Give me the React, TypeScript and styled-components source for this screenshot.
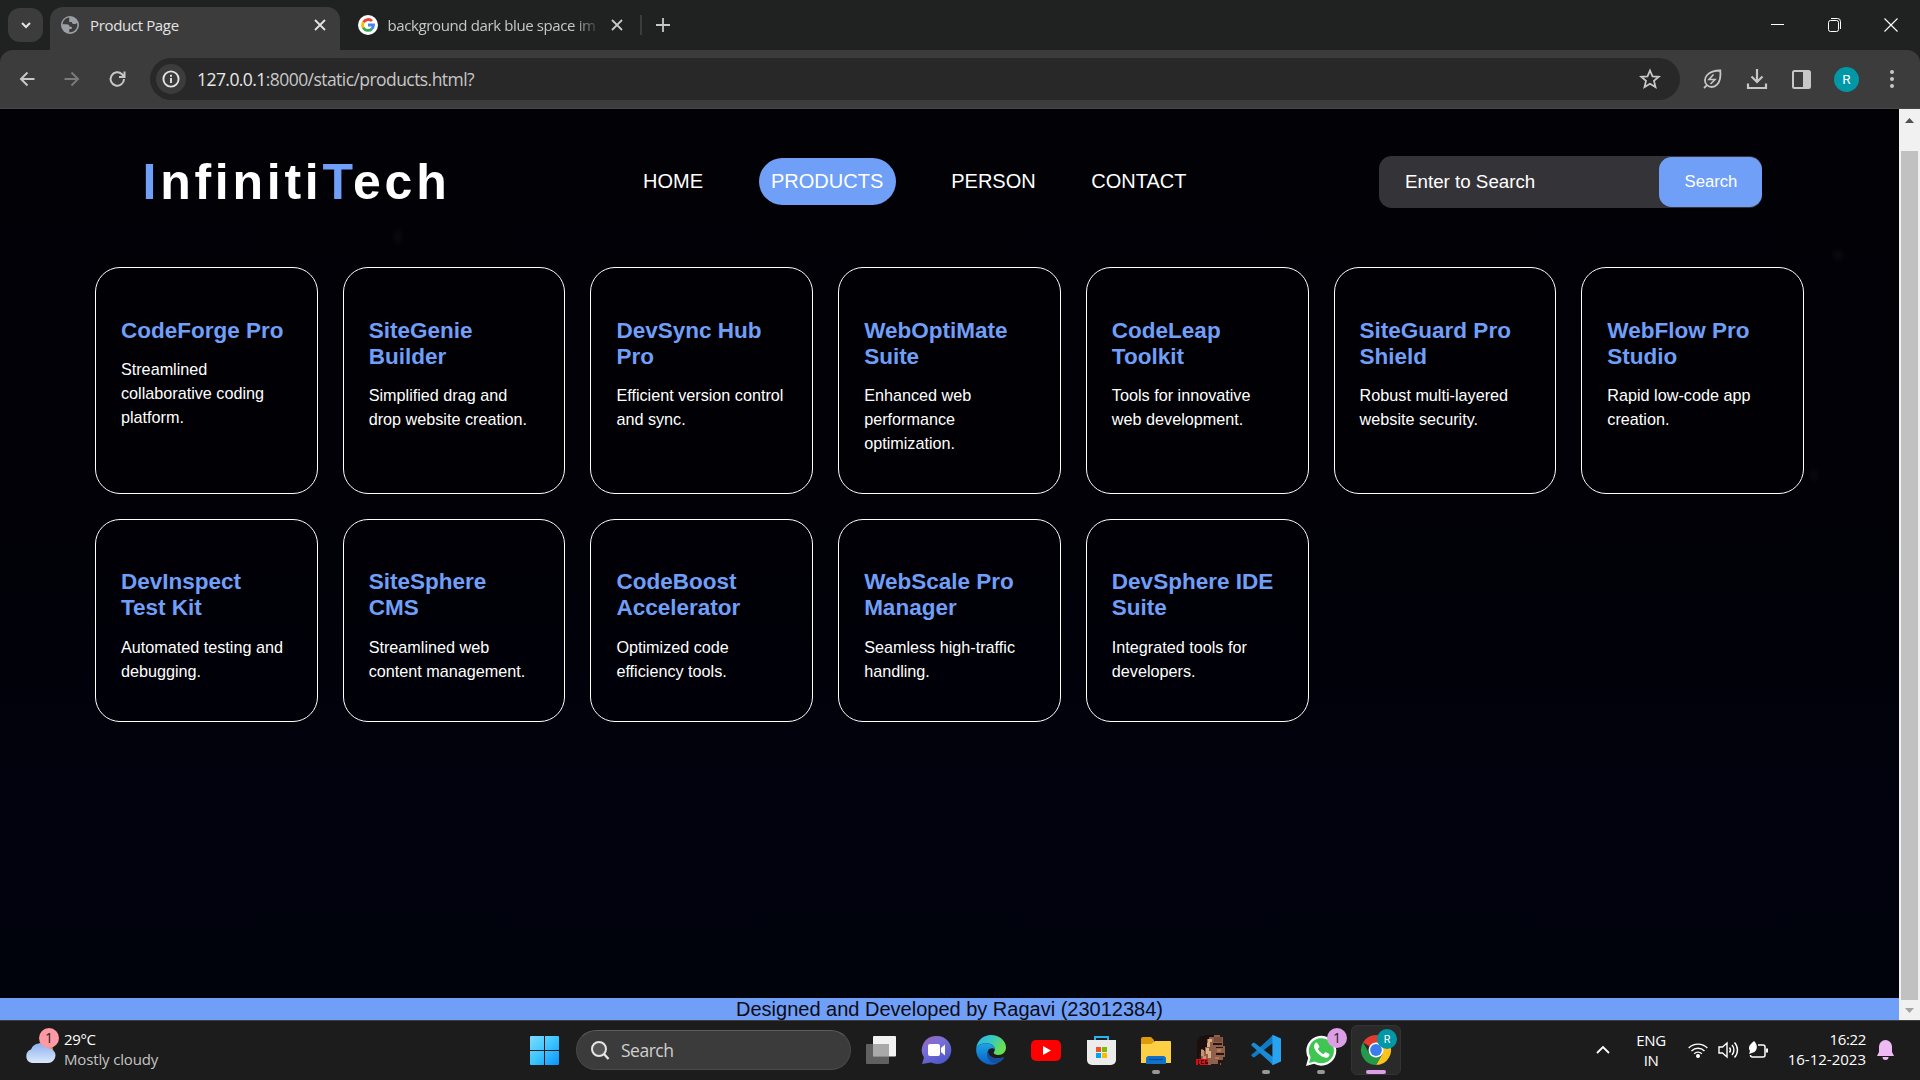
import React from "react";
import styled, { createGlobalStyle } from "styled-components";

const Global = createGlobalStyle`
  * { box-sizing: border-box; }
  body { margin: 0; background: #000; overflow: hidden; font-family: "Liberation Sans", Arial, sans-serif; }
  svg { display: block; flex: none; overflow: visible; }
`;
const ui = `"Open Sans", "Noto Sans", sans-serif`;
const blue = "#709ff8";

const Screen = styled.div`
  width: 1920px; height: 1080px; display: flex; flex-direction: column; overflow: hidden;
`;

/* browser frame */
const TabStrip = styled.div`
  height: 50px; flex: none; background: #202221; display: flex; align-items: flex-start; font-family: ${ui};
`;
const TabMenu = styled.div`
  width: 35px; height: 34px; margin: 8px 7px 0 8px; border-radius: 12px; background: #3c3c3c;
  display: flex; align-items: center; justify-content: center;
`;
const Tab = styled.div<{ $active?: boolean; $w: number; $left: number; $right: number }>`
  width: ${p => p.$w}px; height: ${p => (p.$active ? 43 : 42)}px; margin-top: ${p => (p.$active ? 7 : 8)}px;
  padding: 0 ${p => p.$right}px 8px ${p => p.$left}px; display: flex; align-items: center; gap: ${p => (p.$active ? 11 : 9.5)}px;
  background: ${p => (p.$active ? "#3c3c3c" : "transparent")};
  border-radius: 13px 13px 0 0; color: ${p => (p.$active ? "#e3e3e3" : "#c7c7c7")};
`;
const TabTitle = styled.span<{ $fade?: boolean; $ls: string }>`
  flex: 1; min-width: 0; white-space: nowrap; font-size: 15px; line-height: 20px;
  letter-spacing: ${p => p.$ls};
  ${p => p.$fade && "mask-image: linear-gradient(90deg, #000 88%, rgba(0,0,0,.2) 99%);"}
`;
const Divider = styled.i`width: 2px; height: 20px; margin: 15px 14px 0 13px; background: #3c3c3c;`;
const NewTab = styled.div`margin-top: 18px;`;
const WindowButtons = styled.div`
  margin-left: auto; padding: 18px 22px 0 0; display: flex; gap: 43px; align-items: center;
`;
const Toolbar = styled.div`
  height: 59px; flex: none; background: #202221; font-family: ${ui};
`;
const ToolbarFace = styled.div`
  height: 100%; background: #3c3c3c; border-radius: 13px 13px 0 0; border-bottom: 1px solid #484848;
  display: flex; align-items: center; padding: 0 5px 0 17px;
`;
const NavButtons = styled.div`display: flex; gap: 25px; width: 133px; flex: none;`;
const Address = styled.div`
  width: 1530px; flex: none; height: 42px; border-radius: 21px; background: #282828; display: flex; align-items: center;
  padding: 0 19px 0 6px;
`;
const InfoBadge = styled.span`
  width: 30px; height: 30px; border-radius: 50%; background: #3c3c3c; display: grid; place-items: center;
`;
const Url = styled.span`
  flex: 1; margin-left: 11px; font-size: 17.5px; letter-spacing: -0.56px; color: #c7c7c7; white-space: nowrap;
  b { font-weight: 400; color: #e8e8e8; }
`;
const Tools = styled.div`
  flex: 1; display: grid; grid-template-columns: repeat(5, 45px); align-items: center; justify-items: center; padding-left: 9px;
`;
const Avatar = styled.span<{ $size: number }>`
  width: ${p => p.$size}px; height: ${p => p.$size}px; border-radius: 50%; background: #0097a7; color: #fff;
  font: 400 ${p => p.$size * 0.54}px Roboto, sans-serif; display: grid; place-items: center;
`;

/* page */
const Viewport = styled.div`height: 911px; flex: none; display: flex;`;
const Page = styled.main`
  width: 1899px; height: 100%; display: flex; flex-direction: column; color: #fff;
  background:
    radial-gradient(ellipse 7px 10px at 398px 128px, rgba(255,255,255,.035), transparent),
    radial-gradient(ellipse 8px 8px at 1838px 146px, rgba(255,255,255,.035), transparent),
    radial-gradient(ellipse 7px 9px at 1814px 366px, rgba(255,255,255,.03), transparent),
    linear-gradient(180deg, #010106 0%, #010107 45%, #01020d 75%, #00020c 100%);
`;
const Header = styled.header`height: 158px; flex: none; display: flex; align-items: flex-start;`;
const Logo = styled.h1`
  margin: 44px 0 0 142.5px; width: 500.5px; font-size: 50px; line-height: 58px; font-weight: 700; letter-spacing: 3.75px;
  span { color: ${blue}; }
`;
const Nav = styled.nav`
  margin-top: 49px; height: 47px; width: 736px; flex: none; display: flex; align-items: center; gap: 55.5px; font-size: 20px; line-height: 23px;
`;
const NavLink = styled.a<{ $active?: boolean }>`
  color: #fff; ${p => (p.$active ? `background: ${blue}; padding: 12px 12.5px; border-radius: 25px;` : "padding-bottom: 1px;")}
`;
const SearchBox = styled.div`
  margin-top: 47px; width: 383px; height: 52px; border-radius: 12.5px; background: #343338; display: flex; align-items: center;
  justify-content: space-between; padding-left: 26px; font-size: 18.75px;
`;
const SearchButton = styled.button`
  width: 103px; height: 50px; border: 0; border-radius: 12.5px; background: ${blue}; color: #fff; padding: 0 0 1px 1px;
  font: 16.67px "Liberation Sans", Arial, sans-serif;
`;
const Grid = styled.section`
  padding: 0 5%; flex: 1; display: grid; grid-template-columns: repeat(7, 1fr); gap: 25px; align-content: start;
`;
const Card = styled.article`
  border: 1px solid #fff; border-radius: 25px; padding: 49.6px 25px 37.5px; background: rgba(0,0,0,.2);
`;
const CardTitle = styled.h2`margin: 0 0 13.7px; font-size: 22.5px; line-height: 26px; color: ${blue};`;
const CardText = styled.p`margin: 0; font-size: 16.2px; line-height: 24px;`;
const Footer = styled.footer`
  height: 22px; flex: none; background: ${blue}; color: #0b0b12; font-size: 20px; line-height: 22px; text-align: center;
`;
const Scrollbar = styled.div`
  width: 21px; background: #f1f1f1; display: flex; flex-direction: column; align-items: center;
`;
const ScrollEnd = styled.div<{ $h: number }>`height: ${p => p.$h}px; flex: none; display: grid; place-items: center;`;
const Thumb = styled.div`width: 17px; flex: 1; background: #c1c1c1;`;

/* taskbar */
const Taskbar = styled.div`
  height: 60px; flex: none; background: #1c1c1c; border-top: 1px solid #3e3e3e; display: flex; align-items: center;
  font-family: ${ui}; font-size: 15px; color: #fff; padding-bottom: 1px;
`;
const Weather = styled.div`width: 530px; flex: none; padding-left: 25px; display: flex; align-items: center; gap: 9px;`;
const WeatherText = styled.div`
  display: flex; flex-direction: column; line-height: 20px; letter-spacing: -0.35px; padding-bottom: 3px;
  span { color: #c4c4c4; letter-spacing: -0.15px; }
`;
const SearchPill = styled.div`
  width: 275px; height: 40px; margin: 0 15px 0 17px; border-radius: 20px; background: #3b3b3b; border: 1px solid #494949; border-top-color: #5c5c5c;
  display: flex; align-items: center; gap: 12px; padding-left: 14px; font-size: 17.5px; letter-spacing: -0.5px; color: #cfcfcf;
`;
const Apps = styled.div`display: flex; align-items: center; gap: 5px; margin-left: -10px;`;
const AppButton = styled.div<{ $active?: boolean }>`
  width: 50px; height: 50px; border-radius: 6px; position: relative; display: grid; place-items: center;
  background: ${p => (p.$active ? "#2a2a2a" : "transparent")};
  border: 1px solid ${p => (p.$active ? "#333" : "transparent")};
`;
const Running = styled.i<{ $active?: boolean }>`
  position: absolute; bottom: 0; left: 50%; transform: translateX(-50%); height: 4px; border-radius: 2px;
  width: ${p => (p.$active ? 20 : 8)}px; background: ${p => (p.$active ? "#dc9fe6" : "#979797")};
`;
const Badge = styled.span<{ $bg: string; $x: number; $y: number }>`
  position: absolute; left: ${p => p.$x}px; top: ${p => p.$y}px; width: 20px; height: 20px; border-radius: 50%;
  background: ${p => p.$bg}; color: #222; font-size: 14px; line-height: 20px; text-align: center;
`;
const BadgeSlot = styled.span<{ $x: number; $y: number }>`position: absolute; left: ${p => p.$x}px; top: ${p => p.$y}px;`;
const WeatherIcon = styled.div`position: relative; width: 30px; height: 40px;`;
const Tray = styled.div`margin-left: auto; display: flex; align-items: center; padding-right: 26px;`;
const Lang = styled.div`width: 40px; margin: 0 17px 0 21px; text-align: center; line-height: 20px; letter-spacing: -0.4px;`;
const TrayIcons = styled.div`display: flex; gap: 10px; align-items: center;`;
const Clock = styled.div`
  width: 98px; text-align: right; line-height: 20px; margin-right: 11px; padding-bottom: 3px; letter-spacing: -0.35px;
  span { letter-spacing: 0; }
`;

const products = [
  ["CodeForge Pro", "Streamlined collaborative coding platform."],
  ["SiteGenie Builder", "Simplified drag and drop website creation."],
  ["DevSync Hub Pro", "Efficient version control and sync."],
  ["WebOptiMate Suite", "Enhanced web performance optimization."],
  ["CodeLeap Toolkit", "Tools for innovative web development."],
  ["SiteGuard Pro Shield", "Robust multi-layered website security."],
  ["WebFlow Pro Studio", "Rapid low-code app creation."],
  ["DevInspect Test Kit", "Automated testing and debugging."],
  ["SiteSphere CMS", "Streamlined web content management."],
  ["CodeBoost Accelerator", "Optimized code efficiency tools."],
  ["WebScale Pro Manager", "Seamless high-traffic handling."],
  ["DevSphere IDE Suite", "Integrated tools for developers."],
];

type LineProps = { d: string; size?: number; box?: number; color?: string; w?: number };
const Line = ({ d, size = 20, box = 20, color = "#c7c7c7", w = 2 }: LineProps) => (
  <svg width={size} height={size} viewBox={`0 0 ${box} ${box}`} fill="none" stroke={color} strokeWidth={w}><path d={d} /></svg>
);

const Globe = () => (
  <svg width="18" height="18" viewBox="0 0 18 18"><circle cx="9" cy="9" r="9" fill="#9aa0a6" />
    <path d="M8.500 1.600c-3.700.2-6.600 3-6.900 6.600h4.200c1.800 0 2.800 1 2.800 2.600h2.200v2.200H8.300v3.300c4.500.4 8-3 8-7.200 0-.7-.1-1.300-.3-2-.7.8-1.600 1-2.700 1-1.700 0-2.400-.9-2.400-2.200H8.200V3.500z" fill="#3c3c3c" /></svg>
);
const Google = () => (
  <svg width="20" height="20" viewBox="0 0 20 20"><circle cx="10" cy="10" r="10" fill="#fff" />
    <g fill="none" strokeWidth="2.800"><path d="M5.500 7.200A5.500 5.500 0 0 1 14 6" stroke="#ea4335" /><path d="M5.300 12.700A5.500 5.500 0 0 1 5.500 7" stroke="#fbbc05" /><path d="M13.800 13.900A5.500 5.500 0 0 1 5.200 12.600" stroke="#34a853" /><path d="M10 10h5.500a5.500 5.500 0 0 1-1.900 4" stroke="#4285f4" /></g></svg>
);
const ChromeLogo = () => (
  <svg width="30" height="30" viewBox="0 0 30 30">
    <path d="M15 15 2 7.500A15 15 0 0 1 28 7.500H15z" fill="#e33b2e" />
    <path d="M15 7.500h13A15 15 0 0 1 15 30l6.500-11.200z" fill="#fcc31e" />
    <path d="M2 7.500A15 15 0 0 0 15 30l6.500-11.200L15 22 8.500 18.800z" fill="#239a4a" />
    <circle cx="15" cy="15" r="7.500" fill="#fff" /><circle cx="15" cy="15" r="5.900" fill="#3b7ded" /></svg>
);
const EdgeLogo = () => (
  <svg width="30" height="30" viewBox="0 0 30 30"><defs>
    <linearGradient id="e1" x1="0" y1="0" x2="1" y2=".4"><stop offset="0" stopColor="#2cb2e8" /><stop offset=".5" stopColor="#35c8c8" /><stop offset="1" stopColor="#6ae04f" /></linearGradient>
    <linearGradient id="e2" x1="0" y1="0" x2="0" y2="1"><stop offset="0" stopColor="#1da4e4" /><stop offset="1" stopColor="#0a5fc4" /></linearGradient></defs>
    <path d="M.2 13C1.300 5.300 7.500 0 15 0c8.500 0 15 6 15 12.500 0 4.500-3.400 7.500-7.600 7.500-3 0-4.700-1-4.700-2.200 0-.8 1.100-1.300 1.100-3.300 0-3.300-3.400-6.200-8-6.200C5.500 8.300 1.500 10 .2 13z" fill="url(#e1)" />
    <path d="M.2 13C2 9.800 6 8.300 10.500 8.300c4.800 0 8.300 2.900 8.300 6.200-1.500-2-6.300-1.500-7 2.200C10.500 23 16 29 22 27.900A15 15 0 0 1 .2 13z" fill="url(#e2)" />
    <path d="M12 15.500c-3.500 6 2 14.300 10 12.400 2.500-1 4.700-2.800 6-5 .4-.7-.2-1-.8-.7C20 24.500 12 22.500 12 15.500z" fill="#164f9e" /></svg>
);
const WhatsApp = () => (
  <svg width="31" height="31" viewBox="0 0 31 31"><path d="M0 31l2.200-8A15 15 0 1 1 8 28.800z" fill="#fff" />
    <path d="M3 28l1.600-5.700A12.600 12.600 0 1 1 8.800 26.500z" fill="#3fc552" />
    <path d="M11.400 8.200c-.5-1-1.400-.9-2-.3-3 3-.6 7.600 3.200 11.200 4 3.700 8.600 5 10.500 1.800.7-1.300.5-1.800-.2-2.200l-2.900-1.400c-.6-.3-1 0-1.300.5l-1 1.200c-.5.6-5-2.600-5.700-5-.1-.5 1.300-1.300 1.400-2.300.1-.6-1.500-2.700-2-3.500z" fill="#fff" /></svg>
);
const VSCode = () => (
  <svg width="30" height="30" viewBox="0 0 30 30"><path d="M22 0L3.500 17.300 0 20l2 2.300h1.500L22 8z" fill="#0d7cc4" />
    <path d="M0 10l2-2.200h1.500L22 22v8L3 12.700z" fill="#1b8ad4" /><path d="M22 0l8 3.500v23L22 30c-.8 0-.6-.3-.6-1V1c0-.6-.1-1 .6-1z" fill="#29a3ef" /></svg>
);
const Portrait = () => (
  <svg width="30" height="30" viewBox="0 0 30 30" shapeRendering="crispEdges">
    <path d="M4 2h4V0h16v2h3v9h2v11h-2v6h-2v2H10l-5-5V9H2V4h2z" fill="#8f604b" />
    <path d="M3 1h5V0h10v2h-5v2h-2v8H9v4H7v-2H5v4H3v7H1V4h2z" fill="#1a0f0c" />
    <path d="M12 4h4v3h-2v5h-3V8h1zM10 13h3v3h2v7h-3v-4h-2z" fill="#dcae86" />
    <path d="M5 15h3v6h2v4H7v-4H5z" fill="#c89270" />
    <path d="M18 2h8v5h-8z" fill="#7a4c3b" />
    <path d="M17 8h9v2h-9zM20 12h7v1h-7zM20 18h8v2h-8zM22 25h5v3h-3v2h-9v-1h7z" fill="#2b1410" />
    <path d="M21 14h4v3h-4zM19 22h4v2h-4z" fill="#b07a5c" />
    <path d="M0 24h12v6H0z" fill="#e30b12" />
    <path d="M2 25v4h2M7.500 25.500H5.500v3h2M11 25.500H9v1.500h2v1.500H9" stroke="#3c0606" fill="none" /></svg>
);

export default function App() {
  return (
    <Screen>
      <Global />
      <TabStrip>
        <TabMenu><Line d="M4 6l4 4 4-4" size={16} box={16} color="#e3e3e3" /></TabMenu>
        <Tab $active $w={290} $left={11} $right={10}>
          <Globe /><TabTitle $ls="-0.35px">Product Page</TabTitle>
          <Line d="M5 5l10 10M15 5L5 15" color="#e3e3e3" w={1.800} />
        </Tab>
        <Tab $w={287} $left={18} $right={0}>
          <Google /><TabTitle $fade $ls="-0.38px">background dark blue space im</TabTitle>
          <Line d="M5 5l10 10M15 5L5 15" w={1.800} />
        </Tab>
        <Divider />
        <NewTab><Line d="M7 0v14M0 7h14" size={14} box={14} w={1.800} /></NewTab>
        <WindowButtons>
          <Line d="M0 6.500h13" size={14} box={14} color="#fff" w={1} />
          <svg width="13" height="14" viewBox="0 0 13 14" fill="none" stroke="#fff"><rect x=".5" y="2.500" width="10" height="11" rx="2" /><path d="M3 .5h6.500a3 3 0 0 1 3 3V11" /></svg>
          <Line d="M.5.5l13 13M13.500.5l-13 13" size={14} box={14} color="#fff" w={1.100} />
        </WindowButtons>
      </TabStrip>
      <Toolbar>
        <ToolbarFace>
          <NavButtons>
            <Line d="M17.500 10H4M10.500 3.500L4 10l6.500 6.500" />
            <Line d="M2.500 10H16M9.500 3.500L16 10l-6.500 6.500" color="#7a7a7a" />
            <Line d="M17 10A6.700 6.700 0 1 1 15 5.200L16.500 7M17.500 2.500V8H12" />
          </NavButtons>
          <Address>
            <InfoBadge><svg width="18" height="18" viewBox="0 0 18 18" fill="none" stroke="#e3e3e3" strokeWidth="1.900"><circle cx="9" cy="9" r="7.600" /><path d="M9 8v5M9 4.800v2" /></svg></InfoBadge>
            <Url><b>127.0.0.1</b>:8000/static/products.html?</Url>
            <Line d="M11 2.500l2.500 5.800 6.300.5-4.800 4.100 1.500 6.200-5.500-3.300-5.500 3.300L7 12.900 2.200 8.800l6.300-.5z" size={22} box={22} w={1.800} />
          </Address>
          <Tools>
            <svg width="20" height="20" viewBox="0 0 20 20" fill="none" stroke="#c7c7c7" strokeWidth="1.800"><path d="M18.300 1.500c.6 6-.2 11-3.300 14.200-3 3-7.200 3-10 .5s-2.800-7 .2-10.200C8.200 2.800 12.500 1.500 18.300 1.500zM5 16.200L2 19" /><path d="M11.500 5.500L7 10.500h6L8.500 15" strokeWidth="1.600" /></svg>
            <Line d="M10 0v12M4.500 7.500L10 13l5.500-5.500M1 14.500V19h18v-4.500" w={2.200} />
            <svg width="19" height="19" viewBox="0 0 19 19"><rect x="1" y="1" width="17" height="17" rx="1.500" fill="none" stroke="#c7c7c7" strokeWidth="2" /><path d="M11 1h7v17h-7z" fill="#c7c7c7" /></svg>
            <Avatar $size={25}>R</Avatar>
            <svg width="20" height="20" viewBox="0 0 20 20" fill="#c7c7c7"><circle cx="10" cy="3" r="2" /><circle cx="10" cy="10" r="2" /><circle cx="10" cy="17" r="2" /></svg>
          </Tools>
        </ToolbarFace>
      </Toolbar>

      <Viewport>
        <Page>
          <Header>
            <Logo><span>I</span>nfiniti<span>T</span>ech</Logo>
            <Nav>
              <NavLink>HOME</NavLink><NavLink $active>PRODUCTS</NavLink><NavLink>PERSON</NavLink><NavLink>CONTACT</NavLink>
            </Nav>
            <SearchBox>Enter to Search<SearchButton>Search</SearchButton></SearchBox>
          </Header>
          <Grid>
            {products.map(([title, text]) => (
              <Card key={title}><CardTitle>{title}</CardTitle><CardText>{text}</CardText></Card>
            ))}
          </Grid>
          <Footer>Designed and Developed by Ragavi (23012384)</Footer>
        </Page>
        <Scrollbar>
          <ScrollEnd $h={42}><svg width="9" height="42"><path d="M0 14l4.500-5L9 14z" fill="#505050" /></svg></ScrollEnd>
          <Thumb />
          <ScrollEnd $h={20}><svg width="9" height="5"><path d="M0 0l4.500 5L9 0z" fill="#a3a3a3" /></svg></ScrollEnd>
        </Scrollbar>
      </Viewport>

      <Taskbar>
        <Weather>
          <WeatherIcon>
            <svg width="30" height="40" viewBox="0 0 30 40"><defs><linearGradient id="cl" x1="0" y1="0" x2="0" y2="1"><stop offset="0" stopColor="#8db2f0" /><stop offset="1" stopColor="#dbe8fb" /></linearGradient></defs>
              <circle cx="20" cy="19" r="8" fill="#f58220" />
              <path d="M7 33a7 7 0 0 1-1-13.500A9.500 9.500 0 0 1 23 18a7.500 7.500 0 0 1 0 15z" fill="url(#cl)" /></svg>
            <Badge $bg="#ff99a4" $x={14} $y={-2}>1</Badge>
          </WeatherIcon>
          <WeatherText>29°C<span>Mostly cloudy</span></WeatherText>
        </Weather>
        <svg width="29" height="29" viewBox="0 0 29 29"><defs><linearGradient id="w" x1="0" y1="0" x2="1" y2="1"><stop offset="0" stopColor="#7fdcff" /><stop offset=".5" stopColor="#3cc4ff" /><stop offset="1" stopColor="#0a93fb" /></linearGradient></defs>
          <path d="M0 1a1 1 0 0 1 1-1h13v14H0zM15 0h13a1 1 0 0 1 1 1v13H15zM0 15h14v14H1a1 1 0 0 1-1-1zM15 15h14v13a1 1 0 0 1-1 1H15z" fill="url(#w)" /></svg>
        <SearchPill>
          <svg width="18" height="19" viewBox="0 0 18 19" fill="none" stroke="#e6e6e6" strokeWidth="2"><circle cx="8" cy="8" r="7" fill="#555" /><path d="M13 13l4.500 5" strokeWidth="2.400" /></svg>
          Search
        </SearchPill>
        <Apps>
          <AppButton><svg width="30" height="28" viewBox="0 0 30 28"><rect x="7" y="0" width="23" height="20.500" rx="1" fill="#f2f2f2" /><rect x="0" y="8" width="23" height="20" rx="1" fill="#6c6c6c" fillOpacity=".85" /><path d="M7 8h16v12.500H7z" fill="#a9a9a9" /></svg></AppButton>
          <AppButton><svg width="29" height="28" viewBox="0 0 29 28"><defs><linearGradient id="t" x1="0" y1="0" x2=".6" y2="1"><stop offset="0" stopColor="#a45fb4" /><stop offset=".4" stopColor="#7a6fd8" /><stop offset="1" stopColor="#5059c9" /></linearGradient></defs><path d="M15 0a14 14 0 1 1-6 26.500L0 28l2-6.500A14 14 0 0 1 15 0z" fill="url(#t)" /><rect x="6" y="8" width="12" height="12" rx="2" fill="#fff" /><path d="M19 12l4-3.500v11L19 16z" fill="#fff" /></svg></AppButton>
          <AppButton><EdgeLogo /></AppButton>
          <AppButton><svg width="30" height="21" viewBox="0 0 30 21"><rect width="30" height="21" rx="5" fill="#f00" /><path d="M12 6l8 4.500-8 4.500z" fill="#fff" /></svg></AppButton>
          <AppButton><svg width="29" height="29" viewBox="0 0 29 29"><path d="M8 5V1h13v4" fill="none" stroke="#27b4ee" strokeWidth="2" /><path d="M0 4h29v20a5 5 0 0 1-5 5H5a5 5 0 0 1-5-5z" fill="#ececec" /><path d="M9 11h5v5H9z" fill="#f25022" /><path d="M15 11h5v5h-5z" fill="#7fba00" /><path d="M9 17h5v5H9z" fill="#00a4ef" /><path d="M15 17h5v5h-5z" fill="#ffb900" /></svg></AppButton>
          <AppButton><svg width="30" height="27" viewBox="0 0 30 27"><path d="M0 2a2 2 0 0 1 2-2h8l3 3v6H0z" fill="#dc9b0a" /><path d="M0 7h10l4-3h15a1 1 0 0 1 1 1v21H0z" fill="#fccf45" /><path d="M5 27v-5a3 3 0 0 1 3-3h14a3 3 0 0 1 3 3v5z" fill="#0f71c9" /><path d="M8 22.500h14" stroke="#0a4d94" strokeWidth="1.200" /></svg><Running /></AppButton>
          <AppButton><Portrait /></AppButton>
          <AppButton><VSCode /><Running /></AppButton>
          <AppButton><WhatsApp /><Badge $bg="#dc9fe6" $x={30} $y={2}>1</Badge><Running /></AppButton>
          <AppButton $active><ChromeLogo /><BadgeSlot $x={25} $y={3}><Avatar $size={20}>R</Avatar></BadgeSlot><Running $active /></AppButton>
        </Apps>
        <Tray>
          <Line d="M1 10l6-6 6 6" size={14} box={14} color="#fff" w={1.800} />
          <Lang>ENG<br />IN</Lang>
          <TrayIcons>
            <svg width="20" height="16" viewBox="0 0 20 16" fill="none" stroke="#fff" strokeWidth="1.400"><path d="M.7 6a13 13 0 0 1 18.600 0M3.500 9a9.200 9.200 0 0 1 13 0M6.200 11.700a5.400 5.400 0 0 1 7.600 0" /><circle cx="10" cy="14" r="1.300" fill="#fff" /></svg>
            <svg width="20" height="18" viewBox="0 0 20 18" fill="none" stroke="#fff" strokeWidth="1.400"><path d="M1 6h3.500L9 2v14l-4.500-4H1zM11.500 6.500a4 4 0 0 1 0 5M14 4a7.500 7.500 0 0 1 0 10M16.500 1.500a11 11 0 0 1 0 15" /></svg>
            <svg width="20" height="18" viewBox="0 0 20 18" fill="none" stroke="#fff" strokeWidth="1.500"><path d="M10 4h5a2 2 0 0 1 2 2v8a2 2 0 0 1-2 2H4.500a2 2 0 0 1-2-2" /><path d="M18 7.500h2v4h-2z" fill="#fff" stroke="none" /><path d="M6 0c3.500 3.500 4 8 .5 11L1 13l1-3C-.5 6 2 3.500 6 0z" fill="#fff" stroke="none" /></svg>
          </TrayIcons>
          <Clock>16:22<br /><span>16-12-2023</span></Clock>
          <svg width="17" height="20" viewBox="0 0 17 20" fill="#efb9f3"><path d="M8.500 0a6.500 6.500 0 0 1 6.500 6.500V12l2 4H0l2-4V6.500A6.500 6.500 0 0 1 8.500 0zM5.500 17h6a3 3 0 0 1-6 0z" /></svg>
        </Tray>
      </Taskbar>
    </Screen>
  );
}
